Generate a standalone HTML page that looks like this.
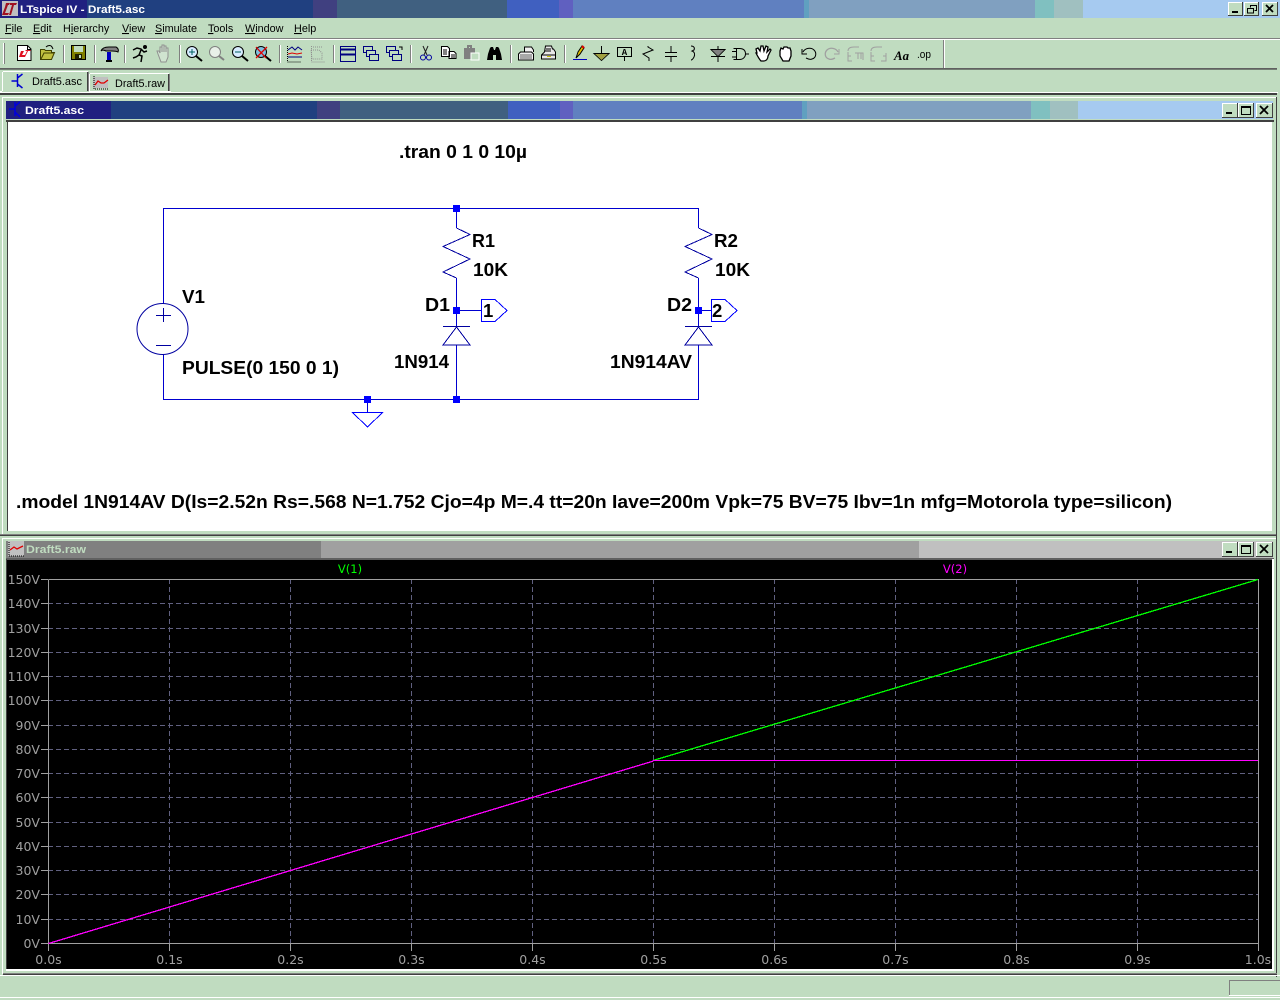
<!DOCTYPE html>
<html><head><meta charset="utf-8"><title>LTspice IV - Draft5.asc</title>
<style>
html,body{margin:0;padding:0;background:#c0dcc0;width:1280px;height:1000px;overflow:hidden}
svg{display:block;position:absolute;left:0;top:0}
.m{font:10.800px "Liberation Sans",sans-serif;fill:#000}
.t{font:bold 11px "Liberation Sans",sans-serif}
.c{font:bold 18.500px "Liberation Sans",sans-serif;fill:#000}
.y{font:12.500px "DejaVu Sans",sans-serif;fill:#a0a0a0;text-anchor:end}
.x{font:12.500px "DejaVu Sans",sans-serif;fill:#a0a0a0;text-anchor:middle}
.u{text-decoration:underline}
</style></head><body>
<svg width="1280" height="1000" viewBox="0 0 1280 1000" xmlns="http://www.w3.org/2000/svg">
<rect width="1280" height="1000" fill="#c0dcc0"/>
<g shape-rendering="crispEdges">
<!-- main title -->
<rect x="0" y="0" width="1280" height="18" fill="#a6caf0"/>
<rect x="0" y="0" width="87" height="18" fill="#202080"/>
<rect x="87" y="0" width="226" height="18" fill="#204080"/>
<rect x="313" y="0" width="24" height="18" fill="#404080"/>
<rect x="337" y="0" width="170" height="18" fill="#406080"/>
<rect x="507" y="0" width="52" height="18" fill="#4060c0"/>
<rect x="559" y="0" width="14" height="18" fill="#6060c0"/>
<rect x="573" y="0" width="231" height="18" fill="#6080c0"/>
<rect x="804" y="0" width="5" height="18" fill="#60a0c0"/>
<rect x="809" y="0" width="226" height="18" fill="#80a0c0"/>
<rect x="1035" y="0" width="19" height="18" fill="#80c0c0"/>
<rect x="1054" y="0" width="29" height="18" fill="#a0c0c0"/>
<rect x="2" y="1" width="16" height="15" fill="#c0c0c0"/>
</g>
<path d="M6 3h4l-1 2h-1l-3 8h4l-1 2H2l3-8zM10 3h7l-1 2h-2l-3 10H9l3-10h-2z" fill="#a01020"/>
<text class="t" x="20" y="13" fill="#fff" textLength="125" lengthAdjust="spacingAndGlyphs">LTspice IV - Draft5.asc</text>

<!-- main window buttons -->
<g shape-rendering="crispEdges">
<rect x="1228" y="2" width="15" height="14" fill="#404040"/><rect x="1228" y="2" width="14" height="13" fill="#fff"/><rect x="1229" y="3" width="13" height="12" fill="#c0dcc0"/><rect x="1232" y="11" width="6" height="2" fill="#000"/>
<rect x="1244" y="2" width="15" height="14" fill="#404040"/><rect x="1244" y="2" width="14" height="13" fill="#fff"/><rect x="1245" y="3" width="13" height="12" fill="#c0dcc0"/>
<path d="M1250.500 5.500h6v5h-2M1250.500 5.500v2M1247.500 8.500h6v4.500h-6z" fill="none" stroke="#000"/><rect x="1250" y="5" width="7" height="1" fill="#000"/><rect x="1247" y="8" width="7" height="1" fill="#000"/>
<rect x="1262" y="2" width="16" height="14" fill="#404040"/><rect x="1262" y="2" width="15" height="13" fill="#fff"/><rect x="1263" y="3" width="14" height="12" fill="#c0dcc0"/>
</g>
<path d="M1266 5l7 7M1273 5l-7 7" stroke="#000" stroke-width="1.800"/>

<!-- menu -->
<text class="m" x="5" y="32"><tspan class="u">F</tspan>ile</text>
<text class="m" x="33" y="32"><tspan class="u">E</tspan>dit</text>
<text class="m" x="63" y="32">H<tspan class="u">i</tspan>erarchy</text>
<text class="m" x="122" y="32"><tspan class="u">V</tspan>iew</text>
<text class="m" x="155" y="32"><tspan class="u">S</tspan>imulate</text>
<text class="m" x="208" y="32"><tspan class="u">T</tspan>ools</text>
<text class="m" x="245" y="32"><tspan class="u">W</tspan>indow</text>
<text class="m" x="294" y="32"><tspan class="u">H</tspan>elp</text>

<g shape-rendering="crispEdges">
<!-- toolbar lines -->
<rect x="0" y="38" width="1280" height="1" fill="#808080"/>
<rect x="0" y="39" width="1280" height="1" fill="#fff"/>
<rect x="0" y="68" width="1277" height="1" fill="#606060"/>
<rect x="0" y="69" width="1277" height="1" fill="#404040" opacity=".6"/>
<rect x="3" y="43" width="1" height="21" fill="#fff"/><rect x="4" y="43" width="1" height="21" fill="#808080"/>
<g fill="#808080">
<rect x="63" y="45" width="1" height="18"/><rect x="94" y="45" width="1" height="18"/><rect x="124" y="45" width="1" height="18"/><rect x="179" y="45" width="1" height="18"/><rect x="279" y="45" width="1" height="18"/><rect x="333" y="45" width="1" height="18"/><rect x="410" y="45" width="1" height="18"/><rect x="510" y="45" width="1" height="18"/><rect x="564" y="45" width="1" height="18"/><rect x="943" y="40" width="1" height="28"/>
</g>
<g fill="#fff">
<rect x="64" y="45" width="1" height="18"/><rect x="95" y="45" width="1" height="18"/><rect x="125" y="45" width="1" height="18"/><rect x="180" y="45" width="1" height="18"/><rect x="280" y="45" width="1" height="18"/><rect x="334" y="45" width="1" height="18"/><rect x="411" y="45" width="1" height="18"/><rect x="511" y="45" width="1" height="18"/><rect x="565" y="45" width="1" height="18"/><rect x="944" y="40" width="1" height="28"/>
</g>
</g>

<!-- toolbar icons -->
<path d="M17.500 45.500h10l3.500 3.500v11.500h-13.500z" fill="#fff" stroke="#000"/><path d="M27.500 45.500v4h3.500" fill="none" stroke="#000"/>
<path d="M21 51h3l-2 4h3l2-4h-2l1-1h5l-1 1h-2l-3 6h-6z" fill="#e01020"/>
<path d="M40.500 49.500h4l1 1h6v2h3l-3 7h-11z" fill="#c0c040" stroke="#404000"/><path d="M41 59l3-6h10" fill="none" stroke="#404000"/><path d="M46 47c2-2 5-2 6 0l1 2" fill="none" stroke="#000"/>
<rect x="71.500" y="45.500" width="14" height="14" fill="#808000" stroke="#000"/><rect x="74" y="46" width="9" height="6" fill="#c0dcc0"/><rect x="75" y="54" width="7" height="5" fill="#202000"/><rect x="79" y="55" width="2" height="3" fill="#c0dcc0"/>
<path d="M101 51c1-3 4-4 8-4h7c2 1 3 3 2 5-2-1-4-1-6-1h-6c-2-1-4-1-5 0z" fill="#808080" stroke="#000"/><rect x="107" y="52" width="4" height="9" fill="#0000c0"/><rect x="106" y="60" width="6" height="2" fill="#000"/>

<!-- runner -->
<g fill="none" stroke="#000"><circle cx="145" cy="47" r="1.500" fill="#000"/><path d="M133 50l4-2 4 1 3 3 3-1M141 50l-2 5 3 1-1 6M139 55l-3 2-3 1" stroke-width="1.500"/></g>
<path d="M158 54l-1-3 2 0 1 2v-6h2v5-7h2v7-6h2v6-4h2v9l-2 5h-5z" fill="#d0e4d0" stroke="#909090"/>

<!-- zooms -->
<g fill="none" stroke="#000">
<circle cx="192" cy="52" r="5.500" fill="#d8ecff"/><path d="M189 52h6M192 49v6" stroke="#006060"/><path d="M196 56l6 5" stroke-width="2"/>
<circle cx="238" cy="52" r="5.500" fill="#d8ecff"/><path d="M235 52h6" stroke="#006060"/><path d="M242 56l6 5" stroke-width="2"/>
<circle cx="261" cy="52" r="5.500" fill="#80c0e0"/><path d="M265 56l6 5" stroke-width="2"/>
</g>
<g fill="#e8f0e8" stroke="#808080"><circle cx="215" cy="52" r="5.500"/><path d="M219 56l5 4" stroke-width="2" fill="none"/></g>
<path d="M256 47l10 11M267 47l-11 11" stroke="#e00000" stroke-width="1.300"/>

<!-- waveform -->
<g fill="none" stroke-width="1"><path d="M287.500 46v16h14" stroke="#000" stroke-dasharray="1 1"/><path d="M288 50l4-3 3 3 3-3 4 3" stroke="#000080"/><path d="M288 54l4-1 5 1 5-1" stroke="#e00000"/><path d="M288 57h14" stroke="#000080"/></g>
<path d="M311 50h8l3 3v6h-10zM311.500 46v16h14M313 47h9" fill="none" stroke="#909090" stroke-dasharray="1 1"/>

<!-- windows -->
<g shape-rendering="crispEdges" fill="#c0dcc0" stroke="#000080">
<rect x="340.500" y="46.500" width="15" height="15"/><path d="M341 49.500h14M341 54.500h14" stroke-width="2" fill="none"/>
<rect x="363.500" y="46.500" width="9" height="6"/><rect x="366.500" y="50.500" width="9" height="6"/><rect x="369.500" y="54.500" width="9" height="6"/>
<rect x="386.500" y="46.500" width="9" height="6"/><rect x="389.500" y="50.500" width="9" height="6"/><rect x="392.500" y="54.500" width="9" height="6"/>
</g>
<path d="M399 47h3v3" fill="none" stroke="#000"/>

<!-- scissors, copy, paste, binoc -->
<g fill="none" stroke="#000"><path d="M423 46l4 9M428 46l-4 9" stroke="#202020"/><circle cx="423" cy="57.500" r="2.500" stroke="#0000a0"/><circle cx="429" cy="57.500" r="2.500" stroke="#0000a0"/></g>
<path d="M441.500 46.500h6l2 2v8h-8z M449 51.500h5l2 2v5h-7z" fill="#fff" stroke="#000"/><path d="M443 50h4M443 52h4M443 54h4M451 55h4M451 57h4" stroke="#000" fill="none"/>
<path d="M464 48h11v11h-11z" fill="#808080"/><path d="M468 48v-2h3v2" fill="none" stroke="#808080" stroke-width="2"/><rect x="471" y="53" width="8" height="7" fill="#c0dcc0" stroke="#fff"/>
<path d="M487 60l1-6 2-6 1-1h2l1 3h1l1-3h2l1 1 2 6 1 6h-6v-5h-3v5z" fill="#000"/>

<!-- printers -->
<path d="M524.500 52v-5h7l2 3v2" fill="#f0f0f0" stroke="#000"/><path d="M518.500 54l2-2h11l2 2v6h-15z" fill="#f0f0f0" stroke="#000"/><rect x="520" y="54" width="12" height="5" fill="#a8a8a8"/>
<path d="M541.500 55l3-3 1-6h6l1 3h1l2 3v7h-14z" fill="#e8e8e8" stroke="#000"/><path d="M542 55h13M546 49h5M545 51h6" stroke="#000"/><rect x="547" y="56" width="4" height="1" fill="#c0c000"/>

<!-- pencil & components -->
<path d="M576 58l2-6 4-6 2 2-4 6z" fill="#e0c000" stroke="#000"/><path d="M582 46l2 2" stroke="#e00000" stroke-width="2"/><path d="M573 59.500h14" stroke="#0000c0" stroke-width="1"/>
<g fill="none" stroke="#000"><path d="M601.500 46v7M594 53.500h15l-7.500 7z" /></g><path d="M595 54h13l-6.500 6z" fill="#a0a040"/>
<rect x="617.500" y="47.500" width="14" height="9" fill="#c0dcc0" stroke="#000" stroke-width="1"/><text x="624.500" y="55" font-family="Liberation Mono,monospace" font-size="9" font-weight="bold" text-anchor="middle">A</text><path d="M624.500 57v4" stroke="#000"/>
<path d="M648 46v1l5 3-10 4 6 4v3" fill="none" stroke="#000"/>
<path d="M671 46v6M671 56v6" stroke="#000" fill="none"/><path d="M665 52.500h12M665 56.500h12" stroke="#000"/>
<path d="M691 46c3 0 4 2 3 4l-2 1c3 1 3 4 2 6-1 2-2 3-3 3" fill="none" stroke="#000"/>
<path d="M711 49.500h14l-7 7zM711 56.500h14M718 46v16" fill="none" stroke="#000"/><path d="M712 50h12l-6 6z" fill="#808080"/>
<path d="M733.500 48.500h6c5 0 6 3 6 5.500s-2 5.500-6 5.500h-6M736.500 48.500v11M745 54h4M732 51.500h4M732 57h4" fill="none" stroke="#000"/>

<!-- hands -->
<path d="M757 53l-1-4 2-1 2 3 1-5 2 0 1 5 2-5 2 1-1 5 3-3 1 1-3 6c0 3-2 5-4 5h-3c-2-2-3-4-5-8z" fill="#fff" stroke="#000" stroke-width="1.300"/>
<path d="M780 51l1-3 2 1 1-2 3 0 1 1 2 0 1 3v5l-2 5h-6l-3-5z" fill="#fff" stroke="#000" stroke-width="1.300"/>

<!-- undo/redo -->
<path d="M803 52c2-4 8-5 11-2 3 3 2 8-2 9-2 1-4 0-6-1" fill="none" stroke="#000"/><path d="M802 49v5h5" fill="none" stroke="#000"/>
<path d="M838 52c-2-4-8-5-11-2-3 3-2 8 2 9 2 1 4 0 6-1" fill="none" stroke="#a0a0a0" stroke-width="1.300"/><path d="M839 49v5h-5" fill="none" stroke="#a0a0a0"/>
<g fill="none" stroke="#a0a0a0"><path d="M848 51c0-3 3-4 6-4h5M848 52v9h4M848 56h3M855 53h8v7M858 53v6M861 53v6"/><path d="M871 51c0-3 3-4 6-4h5M871 52v9h4M871 56h3M886 53v8h-5M886 56h-3"/></g>
<text x="894" y="60" font-family="Liberation Serif,serif" font-size="13" font-weight="bold" font-style="italic" fill="#000" textLength="15" lengthAdjust="spacingAndGlyphs">Aa</text>
<text x="917" y="58" font-family="Liberation Sans,sans-serif" font-size="11" fill="#000" textLength="14" lengthAdjust="spacingAndGlyphs">.op</text>

<!-- tabs -->
<g shape-rendering="crispEdges">
<rect x="0" y="92" width="1278" height="1" fill="#fff"/>
<rect x="0" y="93" width="1277" height="2" fill="#404040"/>
<rect x="3" y="71" width="85" height="1" fill="#fff"/><rect x="2" y="72" width="1" height="19" fill="#fff"/>
<rect x="87" y="72" width="1" height="19" fill="#404040"/><rect x="88" y="72" width="1" height="19" fill="#808080"/>
<rect x="90" y="73" width="79" height="1" fill="#fff"/><rect x="89" y="74" width="1" height="17" fill="#fff"/>
<rect x="168" y="74" width="1" height="17" fill="#404040"/><rect x="169" y="74" width="1" height="17" fill="#808080"/>
<rect x="0" y="91" width="2" height="1" fill="#fff"/><rect x="89" y="91" width="82" height="1" fill="#fff"/>
<rect x="93" y="77" width="15" height="11" fill="#c0c0c0"/>
</g>
<path d="M17.500 74v13M17.500 81h-6M17.500 78l5-4M17.500 84l5 4" stroke="#0000d0" stroke-width="1.500" fill="none"/>
<path d="M94 76v13h15" stroke="#000" stroke-dasharray="1 1" fill="none"/><path d="M95 85l3-4 3 2 3 0 4-3" stroke="#e00000" stroke-width="1.300" fill="none"/>
<text class="m" x="32" y="85" textLength="50" lengthAdjust="spacingAndGlyphs">Draft5.asc</text>
<text class="m" x="115" y="87" textLength="50" lengthAdjust="spacingAndGlyphs">Draft5.raw</text>

<g shape-rendering="crispEdges">
<!-- child 1 frame -->
<rect x="2" y="97" width="1" height="438" fill="#fff"/>
<rect x="3" y="97" width="1274" height="1" fill="#fff"/>
<rect x="1276" y="97" width="1" height="880" fill="#404040"/>
<rect x="0" y="535" width="1277" height="1" fill="#404040"/>
<rect x="0" y="534" width="1276" height="1" fill="#808080"/>
<!-- child 1 title -->
<rect x="6" y="101" width="1267" height="18" fill="#a6caf0"/>
<rect x="6" y="101" width="105" height="18" fill="#202080"/>
<rect x="111" y="101" width="206" height="18" fill="#204080"/>
<rect x="317" y="101" width="23" height="18" fill="#404080"/>
<rect x="340" y="101" width="168" height="18" fill="#406080"/>
<rect x="508" y="101" width="52" height="18" fill="#4060c0"/>
<rect x="560" y="101" width="13" height="18" fill="#6060c0"/>
<rect x="573" y="101" width="229" height="18" fill="#6080c0"/>
<rect x="802" y="101" width="5" height="18" fill="#60a0c0"/>
<rect x="807" y="101" width="224" height="18" fill="#80a0c0"/>
<rect x="1031" y="101" width="19" height="18" fill="#80c0c0"/>
<rect x="1050" y="101" width="28" height="18" fill="#a0c0c0"/>
<!-- client -->
<rect x="6" y="120" width="1268" height="2" fill="#404040"/>
<rect x="7" y="121" width="1" height="410" fill="#404040"/>
<rect x="8" y="122" width="1264" height="409" fill="#fff"/>
<!-- buttons -->
<rect x="1222" y="103" width="16" height="15" fill="#404040"/><rect x="1222" y="103" width="15" height="14" fill="#fff"/><rect x="1223" y="104" width="14" height="13" fill="#c0dcc0"/><rect x="1226" y="112" width="6" height="2" fill="#000"/>
<rect x="1238" y="103" width="16" height="15" fill="#404040"/><rect x="1238" y="103" width="15" height="14" fill="#fff"/><rect x="1239" y="104" width="14" height="13" fill="#c0dcc0"/><rect x="1241.500" y="106.500" width="9" height="8" fill="none" stroke="#000"/><rect x="1241" y="106" width="10" height="2" fill="#000"/>
<rect x="1256" y="103" width="17" height="15" fill="#404040"/><rect x="1256" y="103" width="16" height="14" fill="#fff"/><rect x="1257" y="104" width="15" height="13" fill="#c0dcc0"/>
</g>
<path d="M1260 106l8 8M1268 106l-8 8" stroke="#000" stroke-width="1.800"/>
<path d="M15 102v14M15 109h-6M15 106l5-4M15 112l5 5" stroke="#0000e0" stroke-width="1.500" fill="none"/>
<text class="t" x="25" y="114" fill="#fff" textLength="59" lengthAdjust="spacingAndGlyphs">Draft5.asc</text>

<!-- schematic -->
<g shape-rendering="crispEdges" fill="none">
<path d="M163.500 304V208.500H698.500V228M456.500 208.500V228M456.500 278V327M456.500 345V399.500M163.500 354V399.500H698.500V345M698.500 278V327M456.500 310.500H481M698.500 310.500H711M367.500 399.500V412" stroke="#0000d0"/>
<path d="M456.500 228L470 234.500 443 246.500 470 259 443 272 456.500 278M698.500 228L712 234.500 685 246.500 712 259 685 272 698.500 278M443 326.500H470M456.500 327L443 345H470ZM685 326.500H712M698.500 327L685 345H712ZM156 315.500H171M163.500 308V322M156 345.500H171" stroke="#0000a0"/>
<path d="M352.500 412.500H382.500L367.500 427ZM481.500 299.500H495L507 310.500 495 321.500H481.500ZM711.500 299.500H725L737 310.500 725 321.500H711.500Z" stroke="#0000ff"/>
</g>
<circle cx="162.500" cy="329" r="25.500" fill="none" stroke="#0000a0" stroke-width="1"/>
<g fill="#0000ff" shape-rendering="crispEdges">
<rect x="453" y="205" width="7" height="7"/><rect x="453" y="307" width="7" height="7"/><rect x="695" y="307" width="7" height="7"/><rect x="453" y="396" width="7" height="7"/><rect x="364" y="396" width="7" height="7"/>
</g>
<text class="c" x="399" y="158" textLength="128" lengthAdjust="spacingAndGlyphs">.tran 0 1 0 10µ</text>
<text class="c" x="182" y="303" textLength="23" lengthAdjust="spacingAndGlyphs">V1</text>
<text class="c" x="182" y="374" textLength="157" lengthAdjust="spacingAndGlyphs">PULSE(0 150 0 1)</text>
<text class="c" x="472" y="247" textLength="23" lengthAdjust="spacingAndGlyphs">R1</text>
<text class="c" x="473" y="276" textLength="35" lengthAdjust="spacingAndGlyphs">10K</text>
<text class="c" x="425" y="311" textLength="25" lengthAdjust="spacingAndGlyphs">D1</text>
<text class="c" x="394" y="368" textLength="55" lengthAdjust="spacingAndGlyphs">1N914</text>
<text class="c" x="483" y="317">1</text>
<text class="c" x="714" y="247" textLength="24" lengthAdjust="spacingAndGlyphs">R2</text>
<text class="c" x="715" y="276" textLength="35" lengthAdjust="spacingAndGlyphs">10K</text>
<text class="c" x="667" y="311" textLength="25" lengthAdjust="spacingAndGlyphs">D2</text>
<text class="c" x="712" y="317">2</text>
<text class="c" x="610" y="368" textLength="82" lengthAdjust="spacingAndGlyphs">1N914AV</text>
<text class="c" x="16" y="508" textLength="1156" lengthAdjust="spacingAndGlyphs">.model 1N914AV D(Is=2.52n Rs=.568 N=1.752 Cjo=4p M=.4 tt=20n Iave=200m Vpk=75 BV=75 Ibv=1n mfg=Motorola type=silicon)</text>

<g shape-rendering="crispEdges">
<!-- plot frame -->
<rect x="2" y="538" width="1274" height="1" fill="#fff"/>
<rect x="2" y="538" width="1" height="436" fill="#fff"/>
<rect x="6" y="541" width="315" height="17" fill="#808080"/>
<rect x="321" y="541" width="598" height="17" fill="#a0a0a0"/>
<rect x="919" y="541" width="354" height="17" fill="#c0c0c0"/>
<rect x="6" y="558" width="1268" height="2" fill="#606060"/>
<rect x="7" y="560" width="1265" height="409" fill="#000"/>
<rect x="6" y="559" width="1" height="411" fill="#404040"/>
<rect x="1272" y="559" width="2" height="412" fill="#fff"/>
<rect x="6" y="969" width="1268" height="2" fill="#fff"/>
<rect x="3" y="973" width="1274" height="1" fill="#808080"/>
<rect x="3" y="974" width="1274" height="1" fill="#404040"/>
<rect x="0" y="975" width="1280" height="1" fill="#fff"/>
<!-- plot buttons -->
<rect x="1222" y="542" width="16" height="15" fill="#404040"/><rect x="1222" y="542" width="15" height="14" fill="#fff"/><rect x="1223" y="543" width="14" height="13" fill="#c0dcc0"/><rect x="1226" y="551" width="6" height="2" fill="#000"/>
<rect x="1238" y="542" width="16" height="15" fill="#404040"/><rect x="1238" y="542" width="15" height="14" fill="#fff"/><rect x="1239" y="543" width="14" height="13" fill="#c0dcc0"/><rect x="1241.500" y="545.500" width="9" height="8" fill="none" stroke="#000"/><rect x="1241" y="545" width="10" height="2" fill="#000"/>
<rect x="1256" y="542" width="17" height="15" fill="#404040"/><rect x="1256" y="542" width="16" height="14" fill="#fff"/><rect x="1257" y="543" width="15" height="13" fill="#c0dcc0"/>
<rect x="8" y="541" width="16" height="15" fill="#c0c0c0"/>
</g>
<path d="M1260 545l8 8M1268 545l-8 8" stroke="#000" stroke-width="1.800"/>
<path d="M9 542v14h15" stroke="#000" stroke-dasharray="1 1" fill="none"/><path d="M10 550l4-3 3 2 6-3" stroke="#e00000" stroke-width="1.300" fill="none"/>
<text class="t" x="26" y="553" fill="#c0dcc0" textLength="60" lengthAdjust="spacingAndGlyphs">Draft5.raw</text>

<!-- grid -->
<g shape-rendering="crispEdges">
<path d="M48 603.500H1258M48 628.500H1258M48 652.500H1258M48 676.500H1258M48 700.500H1258M48 725.500H1258M48 749.500H1258M48 773.500H1258M48 797.500H1258M48 822.500H1258M48 846.500H1258M48 870.500H1258M48 894.500H1258M48 919.500H1258M169.500 579V943M290.500 579V943M411.500 579V943M532.500 579V943M653.500 579V943M774.500 579V943M895.500 579V943M1016.500 579V943M1137.500 579V943" stroke="#606080" stroke-dasharray="5 3" fill="none"/>
<path d="M48.500 579.500H1258.500V951M48.500 579.500V951M48 943.500H1258.500M41 579.500H48M41 603.500H48M41 628.500H48M41 652.500H48M41 676.500H48M41 700.500H48M41 725.500H48M41 749.500H48M41 773.500H48M41 797.500H48M41 822.500H48M41 846.500H48M41 870.500H48M41 894.500H48M41 919.500H48M41 943.500H48M169.500 943V951M290.500 943V951M411.500 943V951M532.500 943V951M653.500 943V951M774.500 943V951M895.500 943V951M1016.500 943V951M1137.500 943V951" stroke="#a0a0a0" fill="none"/>
<path d="M653 760.500L1258 579.500" stroke="#00ff00" stroke-width="1.300" fill="none"/>
<path d="M48.500 943.500L653.500 761" stroke="#ff00ff" stroke-width="1.300" fill="none"/>
<rect x="653" y="760" width="605" height="1" fill="#ff00ff"/>
</g>
<text class="y" x="40" y="584">150V</text>
<text class="y" x="40" y="608">140V</text>
<text class="y" x="40" y="633">130V</text>
<text class="y" x="40" y="657">120V</text>
<text class="y" x="40" y="681">110V</text>
<text class="y" x="40" y="705">100V</text>
<text class="y" x="40" y="730">90V</text>
<text class="y" x="40" y="754">80V</text>
<text class="y" x="40" y="778">70V</text>
<text class="y" x="40" y="802">60V</text>
<text class="y" x="40" y="827">50V</text>
<text class="y" x="40" y="851">40V</text>
<text class="y" x="40" y="875">30V</text>
<text class="y" x="40" y="899">20V</text>
<text class="y" x="40" y="924">10V</text>
<text class="y" x="40" y="948">0V</text>
<text class="x" x="48.500" y="964">0.0s</text>
<text class="x" x="169.500" y="964">0.1s</text>
<text class="x" x="290.500" y="964">0.2s</text>
<text class="x" x="411.500" y="964">0.3s</text>
<text class="x" x="532.500" y="964">0.4s</text>
<text class="x" x="653.500" y="964">0.5s</text>
<text class="x" x="774.500" y="964">0.6s</text>
<text class="x" x="895.500" y="964">0.7s</text>
<text class="x" x="1016.500" y="964">0.8s</text>
<text class="x" x="1137.500" y="964">0.9s</text>
<text class="x" x="1258" y="964">1.0s</text>
<text x="350" y="573" font-family="DejaVu Sans,sans-serif" font-size="11.500" fill="#00ff00" text-anchor="middle">V(1)</text>
<text x="955" y="573" font-family="DejaVu Sans,sans-serif" font-size="11.500" fill="#ff00ff" text-anchor="middle">V(2)</text>

<!-- status -->
<g shape-rendering="crispEdges">
<rect x="1229" y="980" width="51" height="1" fill="#808080"/>
<rect x="1229" y="980" width="1" height="16" fill="#808080"/>
<rect x="1229" y="995" width="51" height="1" fill="#fff"/>
<rect x="0" y="997" width="1280" height="1" fill="#fff"/>
</g>
</svg>
</body></html>
